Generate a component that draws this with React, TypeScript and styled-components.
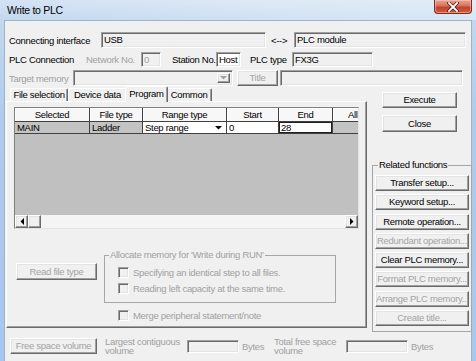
import React from "react";
import styled, { createGlobalStyle, css } from "styled-components";

const Global = createGlobalStyle`
  html, body { margin: 0; padding: 0; background: #ffffff; }
  body {
    font-family: "Liberation Sans", Arial, sans-serif;
    font-size: 9.5px;
    letter-spacing: -0.3px;
    color: #000;
  }
  * { box-sizing: border-box; }
`;

const DIM = "#a0a0a0";

const Window = styled.div`
  width: 476px;
  height: 361px;
  overflow: hidden;
  display: flex;
  flex-direction: column;
  background: linear-gradient(180deg, #d3e3f4 0px, #c3d8ef 20px, #aecbec 120px, #a8c7ee 361px);
`;

const TitleBar = styled.div`
  height: 20px;
  flex: none;
  display: flex;
  align-items: flex-start;
  background: linear-gradient(90deg, rgba(255,255,255,0) 0%, rgba(255,255,255,0.25) 60%, rgba(255,255,255,0.35) 100%);
`;

const TitleText = styled.span`
  padding: 4px 0 0 7px;
  font-size: 10.5px;
  line-height: 12px;
  color: #000;
`;

const CloseButton = styled.div`
  margin-left: auto;
  margin-right: 4px;
  width: 38px;
  height: 14px;
  border: 1px solid #7a2b20;
  border-top: none;
  border-radius: 0 0 4px 4px;
  background: linear-gradient(180deg, #e8a593 0%, #d5735d 45%, #c2432c 55%, #cf5a3e 100%);
  box-shadow: inset 0 0 0 1px rgba(255, 210, 190, 0.5);
  display: flex;
  align-items: center;
  justify-content: center;
`;

const Client = styled.div`
  flex: 1;
  margin: 0 4px;
  background: #f0f0f0;
  border: 1px solid #9eb2c8;
  border-bottom: none;
  display: flex;
  flex-direction: column;
`;

const Row = styled.div<{ $top: number; $h: number; $left?: number }>`
  display: flex;
  align-items: center;
  flex: none;
  height: ${(p) => p.$h}px;
  margin-top: ${(p) => p.$top}px;
  padding-left: ${(p) => p.$left ?? 4}px;
`;

const Label = styled.span<{ $w?: number; $ml?: number; $dim?: boolean }>`
  flex: none;
  white-space: nowrap;
  ${(p) => (p.$w ? `width: ${p.$w}px;` : "")}
  margin-left: ${(p) => p.$ml ?? 0}px;
  color: ${(p) => (p.$dim ? DIM : "#000")};
`;

const TwoLine = styled(Label)`
  white-space: normal;
  line-height: 9.5px;
`;

const sunken = css`
  border: 1px solid;
  border-color: #a0a0a0 #ffffff #ffffff #a0a0a0;
  box-shadow: inset 1px 1px 0 #696969, inset -1px -1px 0 #e3e3e3;
`;

const raised = css`
  border: 1px solid;
  border-color: #ffffff #696969 #696969 #ffffff;
  box-shadow: inset -1px -1px 0 #a0a0a0, inset 1px 1px 0 #e3e3e3;
  background: #f0f0f0;
`;

const Field = styled.div<{ $w: number; $h?: number; $ml?: number; $white?: boolean; $dim?: boolean }>`
  ${sunken};
  flex: none;
  width: ${(p) => p.$w}px;
  height: ${(p) => p.$h ?? 16}px;
  margin-left: ${(p) => p.$ml ?? 0}px;
  background: ${(p) => (p.$white ? "#ffffff" : "#f0f0f0")};
  color: ${(p) => (p.$dim ? DIM : "#000")};
  padding: 0 2px;
  line-height: ${(p) => (p.$h ?? 16) - 2}px;
  white-space: nowrap;
  overflow: hidden;
`;

const Combo = styled.div<{ $w: number }>`
  ${sunken};
  flex: none;
  width: ${(p) => p.$w}px;
  height: 16px;
  background: #f0f0f0;
  display: flex;
  justify-content: flex-end;
  padding: 2px;
`;

const ComboArrow = styled.div`
  ${raised};
  width: 13px;
  height: 100%;
  display: flex;
  align-items: center;
  justify-content: center;
`;

const Button = styled.button<{ $w: number; $h?: number; $ml?: number; $mt?: number; $disabled?: boolean }>`
  ${raised};
  flex: none;
  width: ${(p) => p.$w}px;
  height: ${(p) => p.$h ?? 16}px;
  margin: ${(p) => p.$mt ?? 0}px 0 0 ${(p) => p.$ml ?? 0}px;
  padding: 0;
  font: inherit;
  letter-spacing: inherit;
  line-height: ${(p) => (p.$h ?? 16) - 2}px;
  color: ${(p) => (p.$disabled ? "#a3a3a3" : "#000")};
  text-align: center;
  white-space: nowrap;
  overflow: hidden;
`;

/* ---------- Tabs ---------- */

const Main = styled.div`
  display: flex;
  flex: none;
`;

const TabControl = styled.div`
  flex: none;
  width: 361px;
  margin-left: 1px;
  display: flex;
  flex-direction: column;
`;

const TabStrip = styled.div`
  display: flex;
  align-items: flex-end;
  height: 15px;
  padding-left: 4px;
  position: relative;
  z-index: 1;
`;

const Tab = styled.div<{ $w: number; $active?: boolean }>`
  flex: none;
  width: ${(p) => p.$w + (p.$active ? 4 : 0)}px;
  height: ${(p) => (p.$active ? 16 : 13)}px;
  margin: 0 ${(p) => (p.$active ? -2 : 0)}px ${(p) => (p.$active ? -1 : 0)}px;
  border-top: 1px solid #ffffff;
  border-left: 1px solid #ffffff;
  border-right: 1px solid #696969;
  box-shadow: inset -1px 0 0 #a0a0a0;
  border-radius: 2px 2px 0 0;
  background: #f0f0f0;
  text-align: center;
  line-height: ${(p) => (p.$active ? 13 : 12)}px;
  white-space: nowrap;
  position: relative;
  z-index: ${(p) => (p.$active ? 2 : 1)};
`;

const Panel = styled.div`
  height: 227px;
  border: 1px solid;
  border-color: #ffffff #696969 #696969 #ffffff;
  box-shadow: inset -1px -1px 0 #a0a0a0;
  padding: 5px 0 0 7px;
  display: flex;
  flex-direction: column;
`;

/* ---------- Grid ---------- */

const Grid = styled.div`
  width: 345px;
  height: 122px;
  border: 1px solid;
  border-color: #808080 #e3e3e3 #e3e3e3 #808080;
  display: flex;
  flex-direction: column;
  overflow: hidden;
  background: #c0c0c0;
`;

const COLS = "75px 53px 84px 52px 54px 60px";

const GridRow = styled.div<{ $h: number }>`
  display: grid;
  grid-template-columns: ${COLS};
  height: ${(p) => p.$h}px;
  flex: none;
`;

const HeadCell = styled.div<{ $left?: number }>`
  background: #f7f7f7;
  border-right: 1px solid #404040;
  border-bottom: 1px solid #404040;
  box-shadow: inset 1px 1px 0 #ffffff;
  text-align: ${(p) => (p.$left !== undefined ? "left" : "center")};
  padding-left: ${(p) => p.$left ?? 0}px;
  line-height: 13px;
  white-space: nowrap;
  overflow: hidden;
`;

const Cell = styled.div<{ $white?: boolean; $focus?: boolean }>`
  background: ${(p) => (p.$white ? "#ffffff" : "#c3c3c3")};
  border-right: 1px solid #404040;
  border-bottom: 1px solid #404040;
  padding-left: 2px;
  line-height: 11px;
  white-space: nowrap;
  overflow: hidden;
  display: flex;
  align-items: center;
  ${(p) => (p.$focus ? "box-shadow: inset 1px 1px 0 #202020, inset -1px -1px 0 #202020;" : "")}
`;

const CellArrow = styled.span`
  margin-left: auto;
  margin-right: 4px;
  display: flex;
`;

const GridBody = styled.div`
  flex: 1;
  background: #c0c0c0;
`;

const HScroll = styled.div`
  height: 13px;
  flex: none;
  display: flex;
  background: #f4f4f4;
`;

const ScrollBtn = styled.div`
  ${raised};
  width: 13px;
  height: 13px;
  flex: none;
  display: flex;
  align-items: center;
  justify-content: center;
`;

const ScrollTrack = styled.div`
  flex: 1;
`;

/* ---------- Lower panel part ---------- */

const Lower = styled.div`
  display: flex;
  margin-top: 20px;
`;

const Group = styled.fieldset<{ $w: number; $h: number; $ml?: number; $mt?: number; $pl?: number; $pt?: number }>`
  flex: none;
  margin: ${(p) => p.$mt ?? 0}px 0 0 ${(p) => p.$ml ?? 0}px;
  width: ${(p) => p.$w}px;
  height: ${(p) => p.$h}px;
  border: 1px solid #a6a6a6;
  padding: ${(p) => p.$pt ?? 0}px 0 0 ${(p) => p.$pl ?? 0}px;
  min-width: 0;
`;

const Legend = styled.legend<{ $dim?: boolean; $ml?: number }>`
  padding: 0 1px;
  margin-left: ${(p) => p.$ml ?? 4}px;
  line-height: 12px;
  color: ${(p) => (p.$dim ? DIM : "#000")};
  white-space: nowrap;
`;

const CheckRow = styled.div<{ $ml?: number; $mt?: number }>`
  display: flex;
  align-items: center;
  height: 16px;
  margin: ${(p) => p.$mt ?? 0}px 0 0 ${(p) => p.$ml ?? 0}px;
  color: ${DIM};
  white-space: nowrap;
`;

const CheckBox = styled.span`
  ${sunken};
  width: 11px;
  height: 11px;
  flex: none;
  background: #f0f0f0;
  margin-right: 4px;
`;

const LowerRight = styled.div`
  display: flex;
  flex-direction: column;
`;

/* ---------- Right column ---------- */

const RightCol = styled.div`
  flex: 1;
  display: flex;
  flex-direction: column;
`;

const GroupButtons = styled.div`
  display: flex;
  flex-direction: column;
  gap: 3.3px;
`;

const Bottom = styled.div`
  display: flex;
  align-items: center;
  height: 16px;
  margin-top: 6px;
  padding-left: 5px;
  flex: none;
`;

const Tri = ({ dir, color = "#000" }: { dir: "down" | "left" | "right"; color?: string }) => {
  const d =
    dir === "down" ? "M0 0 H7 L3.5 3.5 Z" : dir === "left" ? "M4 0 V7 L0.5 3.5 Z" : "M0 0 V7 L3.5 3.5 Z";
  const w = dir === "down" ? 7 : 4;
  const h = dir === "down" ? 4 : 7;
  return (
    <svg width={w} height={h} viewBox={`0 0 ${w} ${h}`}>
      <path d={d} fill={color} />
    </svg>
  );
};

const relatedButtons: { label: string; disabled?: boolean }[] = [
  { label: "Transfer setup..." },
  { label: "Keyword setup..." },
  { label: "Remote operation..." },
  { label: "Redundant operation...", disabled: true },
  { label: "Clear PLC memory..." },
  { label: "Format PLC memory...", disabled: true },
  { label: "Arrange PLC memory...", disabled: true },
  { label: "Create title...", disabled: true },
];

export default function App() {
  return (
    <>
      <Global />
      <Window>
        <TitleBar>
          <TitleText>Write to PLC</TitleText>
          <CloseButton>
            <svg width="12" height="10" viewBox="0 0 12 10">
              <path d="M2 1 L10 9 M10 1 L2 9" stroke="#5a1d14" strokeWidth="3.4" strokeLinecap="square" />
              <path d="M2 1 L10 9 M10 1 L2 9" stroke="#ffffff" strokeWidth="1.8" strokeLinecap="square" />
            </svg>
          </CloseButton>
        </TitleBar>
        <Client>
          <Row $top={11} $h={16}>
            <Label $w={92}>Connecting interface</Label>
            <Field $w={165}>USB</Field>
            <Label $ml={5} $w={23}>{"<-->"}</Label>
            <Field $w={172}>PLC module</Field>
          </Row>
          <Row $top={4} $h={15}>
            <Label $w={77}>PLC Connection</Label>
            <Label $w={55} $dim>Network No.</Label>
            <Field $w={20} $h={15} $dim>0</Field>
            <Label $ml={11} $w={44}>Station No.</Label>
            <Field $w={25} $h={15} $white>Host</Field>
            <Label $ml={9} $w={42}>PLC type</Label>
            <Field $w={81} $h={15}>FX3G</Field>
          </Row>
          <Row $top={3} $h={16}>
            <Label $w={64} $dim>Target memory</Label>
            <Combo $w={160}>
              <ComboArrow>
                <Tri dir="down" color="#a0a0a0" />
              </ComboArrow>
            </Combo>
            <Button $w={41} $ml={4} $disabled>Title</Button>
            <Field $w={183} $ml={2} />
          </Row>
          <Main>
            <TabControl>
              <TabStrip>
                <Tab $w={58}>File selection</Tab>
                <Tab $w={59}>Device data</Tab>
                <Tab $w={39} $active>Program</Tab>
                <Tab $w={46}>Common</Tab>
              </TabStrip>
              <Panel>
                <Grid>
                  <GridRow $h={14}>
                    <HeadCell>Selected</HeadCell>
                    <HeadCell>File type</HeadCell>
                    <HeadCell>Range type</HeadCell>
                    <HeadCell>Start</HeadCell>
                    <HeadCell>End</HeadCell>
                    <HeadCell $left={15}>All files</HeadCell>
                  </GridRow>
                  <GridRow $h={12}>
                    <Cell>MAIN</Cell>
                    <Cell>Ladder</Cell>
                    <Cell $white>
                      Step range
                      <CellArrow>
                        <Tri dir="down" />
                      </CellArrow>
                    </Cell>
                    <Cell $white>0</Cell>
                    <Cell $white $focus>28</Cell>
                    <Cell />
                  </GridRow>
                  <GridBody />
                  <HScroll>
                    <ScrollBtn>
                      <Tri dir="left" />
                    </ScrollBtn>
                    <ScrollBtn />
                    <ScrollTrack />
                    <ScrollBtn>
                      <Tri dir="right" />
                    </ScrollBtn>
                  </HScroll>
                </Grid>
                <Lower>
                  <Button $w={81} $h={17} $ml={2} $mt={14} $disabled>Read file type</Button>
                  <LowerRight>
                    <Group $w={232} $h={54} $ml={7} $pl={13} $pt={3}>
                      <Legend $dim $ml={-9}>Allocate memory for 'Write during RUN'</Legend>
                      <CheckRow>
                        <CheckBox />
                        Specifying an identical step to all files.
                      </CheckRow>
                      <CheckRow>
                        <CheckBox />
                        Reading left capacity at the same time.
                      </CheckRow>
                    </Group>
                    <CheckRow $ml={21} $mt={4}>
                      <CheckBox />
                      Merge peripheral statement/note
                    </CheckRow>
                  </LowerRight>
                </Lower>
              </Panel>
            </TabControl>
            <RightCol>
              <Button $w={75} $ml={15} $mt={6}>Execute</Button>
              <Button $w={75} $h={17} $ml={15} $mt={7}>Close</Button>
              <Group $w={100} $h={173} $ml={5} $mt={27} $pl={2} $pt={4}>
                <Legend $ml={3}>Related functions</Legend>
                <GroupButtons>
                  {relatedButtons.map((b) => (
                    <Button key={b.label} $w={94} $disabled={b.disabled}>
                      {b.label}
                    </Button>
                  ))}
                </GroupButtons>
              </Group>
            </RightCol>
          </Main>
          <Bottom>
            <Button $w={87} $disabled>Free space volume</Button>
            <TwoLine $w={82} $ml={8} $dim>Largest contiguous volume</TwoLine>
            <Field $w={52} $h={13} />
            <Label $w={32} $ml={3} $dim>Bytes</Label>
            <TwoLine $w={72} $dim>Total free space volume</TwoLine>
            <Field $w={62} $h={13} />
            <Label $ml={3} $dim>Bytes</Label>
          </Bottom>
        </Client>
      </Window>
    </>
  );
}
